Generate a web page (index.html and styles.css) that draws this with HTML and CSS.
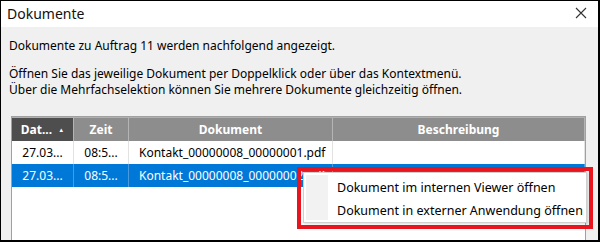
FILE: index.html
```html
<!DOCTYPE html>
<html lang="de">
<head>
<meta charset="utf-8">
<title>Dokumente</title>
<link rel="stylesheet" href="styles.css">
</head>
<body>
<div class="window">
  <div class="titlebar">
    <span class="title">Dokumente</span>
    <svg class="close" width="12" height="12" viewBox="0 0 12 12"><path d="M1 1 L11 11 M11 1 L1 11" stroke="#333" stroke-width="1.1" fill="none"/></svg>
  </div>
  <div class="content">
    <p class="intro">Dokumente zu Auftrag 11 werden nachfolgend angezeigt.</p>
    <div class="hint">
      <div class="line">Öffnen Sie das jeweilige Dokument per Doppelklick oder über das Kontextmenü.</div>
      <div class="line">Über die Mehrfachselektion können Sie mehrere Dokumente gleichzeitig öffnen.</div>
    </div>
    <div class="tablewrap">
      <div class="grid">
        <div class="hd sorted">Dat... <span class="arrow">▲</span></div>
        <div class="hd">Zeit</div>
        <div class="hd">Dokument</div>
        <div class="hd">Beschreibung</div>
        <div class="cell">27.03...</div>
        <div class="cell">08:5...</div>
        <div class="cell doc">Kontakt_00000008_00000001.pdf</div>
        <div class="cell"></div>
        <div class="cell sel">27.03...</div>
        <div class="cell sel">08:5...</div>
        <div class="cell sel doc">Kontakt_00000008_00000002.pdf</div>
        <div class="cell sel"></div>
      </div>
    </div>
  </div>
  <div class="highlight"></div>
  <div class="menu">
    <div class="iconcol"></div>
    <div class="items">
      <div class="item">Dokument im internen Viewer öffnen</div>
      <div class="item">Dokument in externer Anwendung öffnen</div>
    </div>
  </div>
</div>
</body>
</html>
```
FILE: styles.css
```css
* { box-sizing: border-box; }
html, body { margin: 0; padding: 0; }
body {
  width: 600px;
  height: 242px;
  overflow: hidden;
  font-family: "Noto Sans", "Open Sans", sans-serif;
  font-size: 12px;
  color: #000;
  background: #fff;
}
.window {
  position: relative;
  width: 600px;
  height: 242px;
  border: 1px solid #000;
  border-right-width: 2px;
  border-bottom-width: 2px;
  display: flex;
  flex-direction: column;
  background: #f0f0f0;
}
.titlebar {
  height: 26px;
  background: #fff;
  display: flex;
  align-items: center;
  justify-content: space-between;
  padding: 0 11px 2px 6px;
  flex: none;
}
.title { font-size: 14px; color: #111; }
.close { display: block; }
.content {
  flex: 1;
  display: flex;
  flex-direction: column;
  padding: 11px 0 0 8px;
  min-height: 0;
}
.intro { margin: 0; line-height: 16px; }
.hint { margin: 12px 0 0; }
.line { line-height: 16px; }
.tablewrap {
  margin-top: 18px;
  margin-left: 2px;
  flex: 1;
  display: flex;
  min-height: 0;
}
.grid {
  width: 575px;
  background: #fff;
  border: 1px solid #a0a0a0;
  border-bottom: 0;
  display: grid;
  grid-template-columns: 62px 55px 204px 1fr;
  grid-template-rows: 24px 23px 23px;
  align-content: start;
}
.hd {
  background: #8d8d8d;
  color: #fff;
  font-weight: bold;
  text-align: center;
  line-height: 23px;
  border-right: 1px solid #b4b4b4;
  border-top: 1px solid #b0b0b0;
}
.hd.sorted { background: #4e4e4e; }
.arrow { font-size: 6px; vertical-align: 2px; margin-left: 3px; }
.cell {
  line-height: 23px;
  text-align: center;
  border-right: 1px solid #e2e2e2;
  white-space: nowrap;
  overflow: hidden;
}
.cell.doc { text-align: left; padding-left: 10px; }
.cell.sel { background: #0078d7; color: #fff; border-right-color: #4a9ae0; }
.highlight {
  position: absolute;
  left: 296px;
  top: 166px;
  width: 296px;
  height: 62px;
  border: 4px solid #e8141e;
}
.menu {
  position: absolute;
  left: 302px;
  top: 171px;
  width: 284px;
  height: 51px;
  background: #fff;
  border: 1px solid #cfcfcf;
  display: flex;
  box-shadow: 1px 1px 2px rgba(0,0,0,0.15);
}
.iconcol { width: 22px; margin: 2px 0 2px 2px; background: #f2f2f2; }
.items { padding: 3px 0 0 9px; }
.item { line-height: 23px; font-size: 12.5px; }
```
